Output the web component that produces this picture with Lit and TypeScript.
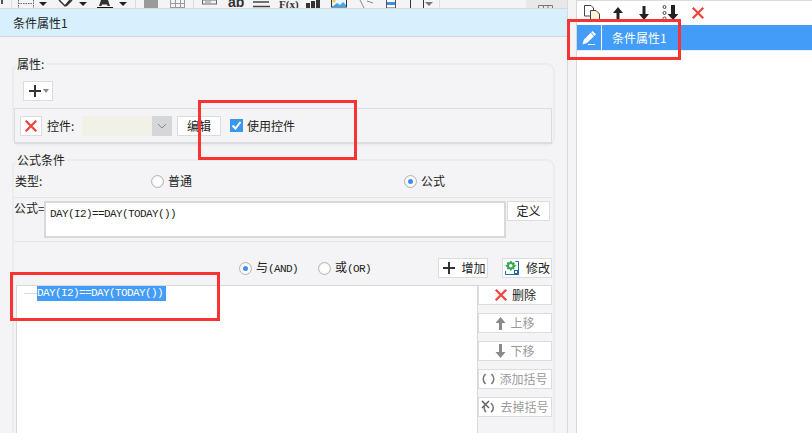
import { LitElement, html, css, svg } from "lit";
import { customElement } from "lit/decorators.js";

const cross = (s = 16) => svg`<svg width="${s}" height="${s}" viewBox="0 0 16 16"><path d="M2 2 14 14M14 2 2 14" stroke="#f0443c" stroke-width="2.6" fill="none"/></svg>`;
const plus = svg`<svg width="14" height="14" viewBox="0 0 14 14"><path d="M7 1V13M1 7H13" stroke="#333" stroke-width="2" fill="none"/></svg>`;
const up = (c: string, w = 11, h = 14) => svg`<svg width="${w}" height="${h}" viewBox="0 0 11 14"><path d="M5.500 1 10.500 7H7V14H4V7H.5Z" fill="${c}"/></svg>`;
const down = (c: string, w = 11, h = 14) => svg`<svg width="${w}" height="${h}" viewBox="0 0 11 14"><path d="M5.500 14 10.500 8H7V0H4V8H.5Z" fill="${c}"/></svg>`;

const toolbar = svg`<svg class="tb" width="567" height="8" viewBox="0 0 567 8">
  <rect x="526" width="41" height="8" fill="#e8e8e8"/>
  <path d="M1.500 0V4M2.500 0V4" stroke="#555" stroke-width="1"/>
  <path d="M11.500 0V8M135.500 0V8M193.500 0V8M439.500 0V8" stroke="#dcdcde"/>
  <path d="M18.500 0V8M33.500 0V8M18 3.500H34" stroke="#666" stroke-dasharray="1.500 1" fill="none"/>
  <path d="M39 2h8l-4 4zM79 2h8l-4 4zM119 2h8l-4 4z" fill="#222"/>
  <path d="M59 0 65 6 70 0M66 6 72 0" stroke="#333" stroke-width="1.500" fill="#fff"/>
  <path d="M99 6 101 0H108L110 6H107.500L107 4.500H102L101.500 6Z" fill="#333"/>
  <rect x="97" y="7" width="16" height="1" fill="#111"/>
  <rect x="144" width="14" height="8" fill="#9a9a9a"/>
  <path d="M170.500 0V8M175.500 0V8M180.500 0V8M184.500 0V8M170 3.500H185M170 7.500H185" stroke="#9a9a9a" fill="none"/>
  <rect x="202.500" y="0" width="14" height="4" fill="none" stroke="#666"/>
  <rect x="205" y="1.500" width="6" height="1" fill="#888"/>
  <text x="228" y="7" font-family="Liberation Sans, sans-serif" font-weight="700" font-size="14" fill="#333">ab</text>
  <path d="M253 2H269M253 6.500H270" stroke="#444" stroke-width="1.500"/>
  <text x="279" y="8" font-family="Liberation Serif, serif" font-weight="700" font-size="11" fill="#333">F(x)</text>
  <path d="M306 3h4v5h-4zM311 1h4v7h-4zM316 0h4v8h-4z" fill="#333"/>
  <rect x="331.500" y="-2" width="15" height="9" fill="#eaf5fc" stroke="#333"/>
  <path d="M332 7 337 3 340 5 343 2 346 5V7Z" fill="#3fa7ec"/>
  <circle cx="334" cy="1" r="1.500" fill="#f6c64a"/>
  <path d="M360 0 364 8M367 1 373 3" stroke="#888" stroke-width="1" fill="none"/>
  <rect x="386.500" y="-2" width="9" height="10" fill="#fff" stroke="#555"/>
  <rect x="387" y="2" width="8" height="3" fill="#3d8fe0"/>
  <path d="M410.500 0V8M423.500 0V8" stroke="#333"/>
  <path d="M425 2h8l-4 4z" fill="#777"/>
  <path d="M538.500 8V5.500H552.500V8M543.500 5V8M548 5V8" stroke="#777" fill="none"/>
</svg>`;

const gear = svg`<svg width="17" height="16" viewBox="0 0 17 16">
  <path d="M6 1 7.500 1 8 2.800 9.600 2 10.800 3 10 4.500 11.800 5V6.500L10 7 10.800 8.600 9.600 9.600 8 8.800 7.500 10.600H6L5.500 8.800 3.900 9.600 2.700 8.600 3.500 7 1.700 6.500V5L3.500 4.500 2.700 3 3.900 2 5.500 2.800Z" fill="#2fa84a"/>
  <circle cx="6.800" cy="5.800" r="1.800" fill="#fff"/>
  <path d="M11.500 1.500H14.500V14.500H1.500V11" stroke="#1c6aa8" fill="none"/>
  <rect x="10.500" y="10.500" width="3" height="3" fill="#fff" stroke="#1c6aa8"/>
</svg>`;

const paren = svg`<svg width="13" height="12" viewBox="0 0 13 12"><path d="M3.500 1C.5 4 .5 8 3.500 11M9.500 1C12.500 4 12.500 8 9.500 11" stroke="#777" stroke-width="1.600" fill="none"/></svg>`;
const parenX = svg`<svg width="15" height="14" viewBox="0 0 15 14"><path d="M1 1 8 8M8 1 1 8" stroke="#555" stroke-width="1.300" fill="none"/><path d="M5 3C2 6 3 10 5 12M10 3C13 6 13 10 10 12" stroke="#777" stroke-width="1.600" fill="none"/></svg>`;

const copy = svg`<svg width="16" height="16" viewBox="0 0 16 16"><path d="M.5 .5H7L9.500 3V11H.5Z" fill="#fff" stroke="#444"/><path d="M6.500 5.500H12L15.500 9V15.500H6.500Z" fill="#fdf3d8" stroke="#444"/></svg>`;
const dotsDown = svg`<svg width="16" height="16" viewBox="0 0 16 16"><g fill="none" stroke="#444"><circle cx="2.500" cy="2" r="1.500"/><circle cx="2.500" cy="8" r="1.500"/><circle cx="2.500" cy="13.500" r="1.500"/></g><path d="M9 0H13V9H16.500L11 15 5.500 9H9Z" fill="#222"/></svg>`;
const pen = svg`<svg width="16" height="16" viewBox="0 0 16 16"><path d="M11.500 1 15 4.300 6 13 1.500 14.500 2.800 9.800Z" fill="#fff"/><path d="M10 2.700 13.400 6" stroke="#429cf8"/><rect x="7" y="14" width="7" height="1" fill="#fff"/></svg>`;

@customElement("app-root")
export class AppRoot extends LitElement {
  static styles = css`
    :host { display: block; width: 812px; height: 433px; overflow: hidden; position: relative; background: #f4f4f6;
      font-family: "Noto Sans CJK SC", "Liberation Sans", sans-serif; font-size: 12px; line-height: 14px; color: #222; }
    .mono { font-family: "Liberation Mono", "Noto Sans CJK SC", monospace; font-size: 11px; letter-spacing: -0.6px; }
    .app { display: flex; height: 433px; }
    .left { width: 568px; height: 433px; box-sizing: border-box; flex: none; display: flex; flex-direction: column; border-right: 1px solid #d8d8da; }
    .tb { display: block; flex: none; border-bottom: 1px solid #d8d8da; }
    .title { height: 28px; box-sizing: border-box; flex: none; background: #d6f0fd; border-bottom: 1px solid #d4d6d8; padding-left: 13px; display: flex; align-items: center; }
    .body { padding: 20px 0 0 12px; display: flex; flex-direction: column; gap: 7px; }
    .spacer { width: 8px; flex: none; }
    .right { flex: 1; background: #fff; border-left: 1px solid #d8d8da; border-top: 1px solid #dcdcde; }
    .rtools { height: 24px; display: flex; align-items: center; gap: 13px; padding-left: 7px; }
    .rtools svg { flex: none; }
    .rrow { height: 25px; background: #429cf8; color: #fff; display: flex; align-items: center; border-bottom: 1px solid #e4f0fb; }
    .pen { width: 24px; height: 25px; border-right: 1px solid #fff; display: flex; align-items: center; justify-content: center; }
    .rlabel { padding-left: 10px; }
    fieldset { border: 2px solid #ececee; border-radius: 8px; margin: 0; padding: 0; width: 543px; box-sizing: border-box; min-width: 0; }
    legend { margin-left: 1px; padding: 0 2px; line-height: 14px; }
    .attr { height: 89px; }
    .formula { height: 300px; }
    .btn { background: #fff; border: 1px solid #dcdcde; box-sizing: border-box; height: 20px; display: flex; align-items: center; justify-content: center; flex: none; }
    .plus { width: 30px; margin: 10px 0 0 9px; gap: 1px; }
    .caret { width: 0; height: 0; border: 3px solid transparent; border-top: 4px solid #888; border-bottom: 0; }
    .ctrl { height: 36px; width: 538px; margin-top: 7px; box-sizing: border-box; border: 1px solid #dcdcde; border-bottom-width: 2px; display: flex; align-items: center; padding-left: 5px; }
    .xbtn { width: 22px; }
    .clabel { margin-left: 5px; width: 35px; }
    .combo { width: 90px; height: 20px; display: flex; justify-content: flex-end; background: #f1f1e8; flex: none; }
    .combo span { width: 20px; background: #d5d6d8; display: flex; align-items: center; justify-content: center; }
    .edit { width: 44px; margin-left: 5px; }
    .check { width: 13px; height: 13px; background: #3a97f0; margin-left: 9px; margin-right: 4px; display: flex; align-items: center; justify-content: center; flex: none; }
    .inner { width: 538px; }
    .types { height: 31px; box-sizing: border-box; display: grid; grid-template-columns: 136px 253px 1fr; align-items: center; padding: 0 0 2px 1px; border-bottom: 1px solid #e4e4e6; }
    .opt { display: flex; align-items: center; gap: 4px; }
    .radio { width: 13px; height: 13px; box-sizing: border-box; border-radius: 50%; border: 1px solid #b5b5b5; background: radial-gradient(circle, #fff 40%, #e6e6e6); display: flex; align-items: center; justify-content: center; flex: none; }
    .radio.on::after { content: ""; width: 5px; height: 5px; border-radius: 50%; background: #3e8ef0; }
    .frow { height: 44px; box-sizing: border-box; display: flex; align-items: flex-start; padding-top: 3px; border-bottom: 1px solid #e4e4e6; }
    .flabel { width: 30px; flex: none; white-space: nowrap; }
    .area { width: 462px; height: 37px; box-sizing: border-box; background: #fff; border: 2px solid #d8d8d8; padding: 4px 0 0 4px; flex: none; }
    .def { width: 43px; margin-left: 1px; }
    .logic { height: 43px; box-sizing: border-box; display: flex; align-items: flex-start; padding: 16px 0 0 225px; }
    .logic .opt { height: 20px; }
    .o1 { width: 79px; } .o2 { width: 120px; }
    .act { width: 50px; gap: 5px; }
    .act-gap { margin-right: 14px; padding-left: 2px; }
    .bottom { display: flex; margin-left: 2px; }
    .list { width: 462px; height: 160px; box-sizing: border-box; background: #fff; border: 1px solid #d8d8da; border-bottom: 0; padding: 0 0 0 7px; display: flex; align-items: flex-start; flex: none; }
    .branch { width: 13px; height: 1px; background: #dcdcdc; margin-top: 7px; flex: none; }
    .sel { background: #429cf8; color: #fff; padding-right: 3px; line-height: 15px; }
    .side { display: flex; flex-direction: column; gap: 8px; width: 74px; flex: none; }
    .side .btn { gap: 4px; }
    .off { color: #9a9a9a; }
    .mark { position: absolute; border: 3px solid #f93333; box-sizing: border-box; pointer-events: none; }
    .m1 { left: 198px; top: 100px; width: 159px; height: 60px; }
    .m2 { left: 567px; top: 19px; width: 114px; height: 41px; }
    .m3 { left: 10px; top: 272px; width: 210px; height: 49px; }
  `;

  render() {
    return html`
      <div class="app">
        <div class="left">
          ${toolbar}
          <div class="title">条件属性1</div>
          <div class="body">
            <fieldset class="attr">
              <legend>属性:</legend>
              <div class="btn plus">${plus}<span class="caret"></span></div>
              <div class="ctrl">
                <div class="btn xbtn">${cross(14)}</div>
                <span class="clabel">控件:</span>
                <div class="combo"><span><svg width="10" height="6" viewBox="0 0 10 6"><path d="M1 1 5 5 9 1" stroke="#888" fill="none"/></svg></span></div>
                <div class="btn edit">编辑</div>
                <div class="check"><svg width="11" height="11" viewBox="0 0 11 11"><path d="M1.500 5.500 4.500 8.500 9.500 2" stroke="#fff" stroke-width="2" fill="none"/></svg></div>
                <span>使用控件</span>
              </div>
            </fieldset>
            <fieldset class="formula">
              <legend>公式条件</legend>
              <div class="inner">
                <div class="types">
                  <span>类型:</span>
                  <div class="opt"><span class="radio"></span>普通</div>
                  <div class="opt"><span class="radio on"></span>公式</div>
                </div>
                <div class="frow">
                  <span class="flabel">公式=</span>
                  <div class="area mono">DAY(I2)==DAY(TODAY())</div>
                  <div class="btn def">定义</div>
                </div>
                <div class="logic">
                  <div class="opt o1"><span class="radio on"></span><span>与<span class="mono">(AND)</span></span></div>
                  <div class="opt o2"><span class="radio"></span><span>或<span class="mono">(OR)</span></span></div>
                  <div class="btn act act-gap">${plus}<span>增加</span></div>
                  <div class="btn act">${gear}<span>修改</span></div>
                </div>
                <div class="bottom">
                  <div class="list">
                    <span class="branch"></span>
                    <span class="sel mono">DAY(I2)==DAY(TODAY())</span>
                  </div>
                  <div class="side">
                    <div class="btn">${cross(14)}<span>删除</span></div>
                    <div class="btn off">${up("#8a8a8a")}<span>上移</span></div>
                    <div class="btn off">${down("#8a8a8a")}<span>下移</span></div>
                    <div class="btn off">${paren}<span>添加括号</span></div>
                    <div class="btn off">${parenX}<span>去掉括号</span></div>
                  </div>
                </div>
              </div>
            </fieldset>
          </div>
        </div>
        <div class="spacer"></div>
        <div class="right">
          <div class="rtools">
            ${copy}
            <svg width="13" height="14" viewBox="0 0 13 14"><path d="M5 1 10 7H6.500V14H3.500V7H0Z" fill="#222"/></svg>
            <svg width="10" height="14" viewBox="0 0 10 14"><path d="M5 14 10 8H6.500V0H3.500V8H0Z" fill="#222"/></svg>
            ${dotsDown}
            ${cross(14)}
          </div>
          <div class="rrow">
            <div class="pen">${pen}</div>
            <span class="rlabel">条件属性1</span>
          </div>
        </div>
      </div>
      <div class="mark m1"></div>
      <div class="mark m2"></div>
      <div class="mark m3"></div>
    `;
  }
}
